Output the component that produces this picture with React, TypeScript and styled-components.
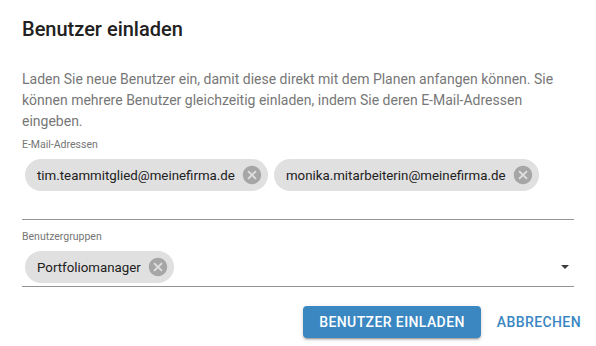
import React from "react";
import styled, { createGlobalStyle } from "styled-components";

const GlobalStyle = createGlobalStyle`
  html, body { margin: 0; padding: 0; background: #ffffff; }
  body { font-family: Roboto, "Liberation Sans", Arial, sans-serif; }
  * { box-sizing: border-box; }
`;

const Dialog = styled.div`
  width: 596px;
  height: 346px;
  padding-top: 13px;
  display: flex;
  flex-direction: column;
  background: #ffffff;
`;

const Title = styled.h2`
  margin: 0;
  padding: 0 22px;
  font-size: 20px;
  line-height: 32px;
  font-weight: 500;
  color: #212121;
`;

const Content = styled.div`
  padding: 0 22px;
  display: flex;
  flex-direction: column;
`;

const Description = styled.p`
  margin: 24px 0 0;
  font-size: 14px;
  line-height: 21px;
  color: #777777;
`;

const Field = styled.div<{ $top: number; $spacer: number }>`
  margin-top: ${(p) => p.$top}px;
  padding-bottom: ${(p) => p.$spacer}px;
  border-bottom: 1px solid #949494;
`;

const Label = styled.div`
  font-size: 10.5px;
  line-height: 12px;
  color: #757575;
`;

const ChipRow = styled.div`
  margin-top: 8px;
  padding-left: 3px;
  padding-right: 5px;
  display: flex;
  align-items: center;
  gap: 6px;
`;

const Spacer = styled.div`
  flex: 1;
`;

const ChipBox = styled.div`
  height: 32px;
  border-radius: 16px;
  background: #e0e0e0;
  display: inline-flex;
  align-items: center;
  padding-left: 12px;
  font-size: 13.3px;
  color: #212121;
  white-space: nowrap;
`;

const DeleteIcon = styled.svg`
  width: 22px;
  height: 22px;
  margin: 0 5px 0 6px;
  fill: #a6a6a6;
  flex: none;
`;

const Arrow = styled.svg`
  width: 8px;
  height: 4px;
  fill: #3c3c3c;
  flex: none;
`;

const Actions = styled.div`
  margin-top: 19px;
  padding: 0 7px 0 0;
  display: flex;
  justify-content: flex-end;
  gap: 8px;
`;

const Button = styled.button<{ $primary?: boolean }>`
  height: 32px;
  border: none;
  border-radius: 4px;
  padding: 0 ${(p) => (p.$primary ? 16 : 8)}px;
  font-family: Roboto, "Liberation Sans", Arial, sans-serif;
  font-size: 14px;
  font-weight: 500;
  letter-spacing: 0.4px;
  text-transform: uppercase;
  cursor: pointer;
  background: ${(p) => (p.$primary ? "#3a87c2" : "transparent")};
  color: ${(p) => (p.$primary ? "#ffffff" : "#3a87c2")};
  box-shadow: ${(p) =>
    p.$primary
      ? "0px 3px 1px -2px rgba(0,0,0,0.2), 0px 2px 2px 0px rgba(0,0,0,0.14), 0px 1px 5px 0px rgba(0,0,0,0.12)"
      : "none"};
`;

const Chip = ({ label }: { label: string }) => (
  <ChipBox>
    {label}
    <DeleteIcon viewBox="0 0 24 24">
      <path d="M12 2C6.47 2 2 6.47 2 12s4.47 10 10 10 10-4.47 10-10S17.53 2 12 2zm5 13.59L15.59 17 12 13.41 8.41 17 7 15.59 10.59 12 7 8.41 8.41 7 12 10.59 15.59 7 17 8.41 13.41 12 17 15.59z" />
    </DeleteIcon>
  </ChipBox>
);

export default function App() {
  return (
    <>
      <GlobalStyle />
      <Dialog>
        <Title>Benutzer einladen</Title>
        <Content>
          <Description>
            Laden Sie neue Benutzer ein, damit diese direkt mit dem Planen anfangen können. Sie
            können mehrere Benutzer gleichzeitig einladen, indem Sie deren E-Mail-Adressen
            eingeben.
          </Description>
          <Field $top={7} $spacer={28}>
            <Label>E-Mail-Adressen</Label>
            <ChipRow>
              <Chip label="tim.teammitglied@meinefirma.de" />
              <Chip label="monika.mitarbeiterin@meinefirma.de" />
            </ChipRow>
          </Field>
          <Field $top={11} $spacer={3}>
            <Label>Benutzergruppen</Label>
            <ChipRow>
              <Chip label="Portfoliomanager" />
              <Spacer />
              <Arrow viewBox="0 0 8 4">
                <path d="M0 0h8L4 4z" />
              </Arrow>
            </ChipRow>
          </Field>
        </Content>
        <Actions>
          <Button $primary>Benutzer einladen</Button>
          <Button>Abbrechen</Button>
        </Actions>
      </Dialog>
    </>
  );
}
